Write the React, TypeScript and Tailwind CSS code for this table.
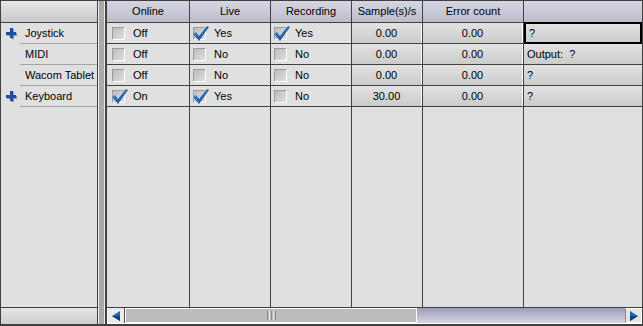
import React from "react";

type Row = {
  name: string;
  plus: boolean;
  online: boolean;
  live: boolean;
  rec: boolean;
  sample: string;
  err: string;
  out: string;
};

const rows: Row[] = [
  { name: "Joystick", plus: true, online: false, live: true, rec: true, sample: "0.00", err: "0.00", out: "?" },
  { name: "MIDI", plus: false, online: false, live: false, rec: false, sample: "0.00", err: "0.00", out: "Output:  ?" },
  { name: "Wacom Tablet", plus: false, online: false, live: false, rec: false, sample: "0.00", err: "0.00", out: "?" },
  { name: "Keyboard", plus: true, online: true, live: true, rec: false, sample: "30.00", err: "0.00", out: "?" },
];

const line = "border-[#404040]";
const numCell =
  "flex items-center justify-center bg-gradient-to-b from-[#e2e2e2] to-[#cbcbcb] border-r border-r-white";

function Plus() {
  return (
    <svg width="12" height="12" viewBox="0 0 12 12" className="shrink-0">
      <rect x="1" y="5" width="10" height="3" fill="#8a94a6" />
      <rect x="5" y="1" width="3" height="10" fill="#8a94a6" />
      <rect x="0" y="4" width="10" height="3" fill="#1c4ea6" />
      <rect x="4" y="0" width="3" height="10" fill="#1c4ea6" />
    </svg>
  );
}

function Check({ on, label, pad }: { on: boolean; label: string; pad: string }) {
  return (
    <div className={"flex items-center h-full " + pad}>
      <div className="relative w-[13px] h-[13px] shrink-0 border border-t-[#9c9c9c] border-l-[#9c9c9c] border-r-white border-b-white bg-gradient-to-br from-[#bdbdbd] to-[#dedede]">
        {on && (
          <svg width="17" height="17" viewBox="0 0 17 17" className="absolute -left-[1px] -top-[3px]">
            <defs>
              <linearGradient id="tick" x1="0" y1="0" x2="1" y2="1">
                <stop offset="0" stopColor="#4a9ae0" />
                <stop offset="1" stopColor="#0a3c7e" />
              </linearGradient>
            </defs>
            <polygon points="0,9 3,7 6,11 14,1 16,2 6,16" fill="url(#tick)" />
          </svg>
        )}
      </div>
      <span className="ml-[8px]">{label}</span>
    </div>
  );
}

function Triangle({ dir }: { dir: "left" | "right" }) {
  return (
    <svg width="9" height="10" viewBox="0 0 9 10">
      {dir === "left" ? (
        <>
          <polygon points="8,0 8,10 0,5" fill="#1a6ab4" />
          <polygon points="8,5 8,10 0,5" fill="#0d3f75" />
        </>
      ) : (
        <>
          <polygon points="1,0 1,10 9,5" fill="#1a6ab4" />
          <polygon points="1,5 1,10 9,5" fill="#0d3f75" />
        </>
      )}
    </svg>
  );
}

export default function App() {
  return (
    <div className="w-[643px] h-[326px] flex border border-b-2 border-[#404040] bg-[#e0e0e0] text-[11px] text-black font-['Liberation_Sans',Arial,sans-serif] leading-none overflow-hidden">
      {/* left tree */}
      <div className={"w-[97px] shrink-0 flex flex-col border-r " + line}>
        <div className={"h-[22px] shrink-0 border-b bg-gradient-to-b from-[#e8e8e8] to-[#c9c9c9] " + line} />
        {rows.map((r) => (
          <div key={r.name} className="h-[21px] shrink-0 flex">
            <div className="w-[19px] shrink-0 flex items-center pl-[5px]">{r.plus && <Plus />}</div>
            <div className="flex-1 flex items-center pl-[5px] border-b border-[#a4a4a4]">{r.name}</div>
          </div>
        ))}
        <div className="flex-1" />
        <div className={"h-[17px] shrink-0 border-t bg-gradient-to-b from-[#e6e6e6] to-[#cfcfcf] " + line} />
      </div>

      {/* splitter */}
      <div className="w-[7px] shrink-0 bg-[#a9a9a9] border-l border-r border-[#ececec]" />

      {/* grid */}
      <div className={"flex-1 flex flex-col border-l-2 " + line}>
        <div className={"h-[22px] shrink-0 flex border-b bg-gradient-to-b from-[#d6d6e2] to-[#bcbccd] " + line}>
          {["Online", "Live", "Recording", "Sample(s)/s", "Error count"].map((h, i) => (
            <div
              key={h}
              className={
                "flex items-center justify-center border-r " +
                line +
                " " +
                ["w-[83px]", "w-[81px]", "w-[81px]", "w-[71px]", "w-[101px]"][i]
              }
            >
              {h}
            </div>
          ))}
          <div className="flex-1" />
        </div>

        {rows.map((r, ri) => (
          <div key={r.name} className={"h-[21px] shrink-0 flex border-b " + line}>
            <div className={"w-[83px] border-r " + line}>
              <Check on={r.online} label={r.online ? "On" : "Off"} pad="pl-[5px]" />
            </div>
            <div className={"w-[81px] border-r " + line}>
              <Check on={r.live} label={r.live ? "Yes" : "No"} pad="pl-[3px]" />
            </div>
            <div className={"w-[81px] border-r " + line}>
              <Check on={r.rec} label={r.rec ? "Yes" : "No"} pad="pl-[3px]" />
            </div>
            <div className={"w-[71px] border-r " + line}>
              <div className={"h-full " + numCell}>{r.sample}</div>
            </div>
            <div className={"w-[101px] border-r " + line}>
              <div className={"h-full " + numCell}>{r.err}</div>
            </div>
            <div
              className={
                "flex-1 flex items-center pl-[3px] whitespace-pre bg-gradient-to-b from-[#e2e2e2] to-[#cbcbcb] " +
                (ri === 0 ? "border-2 border-black -mt-[1px] -mb-[1px]" : "")
              }
            >
              {r.out}
            </div>
          </div>
        ))}

        <div className="flex-1 flex">
          <div className={"w-[83px] border-r " + line} />
          <div className={"w-[81px] border-r " + line} />
          <div className={"w-[81px] border-r " + line} />
          <div className={"w-[71px] border-r " + line} />
          <div className={"w-[101px] border-r " + line} />
          <div className="flex-1" />
        </div>

        {/* horizontal scrollbar */}
        <div className={"h-[17px] shrink-0 flex border-t border-b border-b-white " + line}>
          <div className="w-[18px] shrink-0 flex items-center justify-center bg-[#ebebeb] border-l border-white border-r border-r-[#505050]">
            <Triangle dir="left" />
          </div>
          <div className="w-[292px] shrink-0 flex items-center justify-center bg-[#bcbcbc] border border-white">
            <div className="flex gap-[1px] h-[9px]">
              <div className="w-[1px] bg-[#8c8c8c]" />
              <div className="w-[1px] bg-[#e8e8e8]" />
              <div className="w-[1px] bg-[#8c8c8c]" />
              <div className="w-[1px] bg-[#e8e8e8]" />
              <div className="w-[1px] bg-[#8c8c8c]" />
            </div>
          </div>
          <div className="flex-1 bg-gradient-to-b from-[#9c9cba] to-[#d6d6e2]" />
          <div className="w-[17px] shrink-0 flex items-center justify-center bg-[#e4e4e4] border border-white border-l-[#8a8aa0]">
            <Triangle dir="right" />
          </div>
        </div>
      </div>
    </div>
  );
}
